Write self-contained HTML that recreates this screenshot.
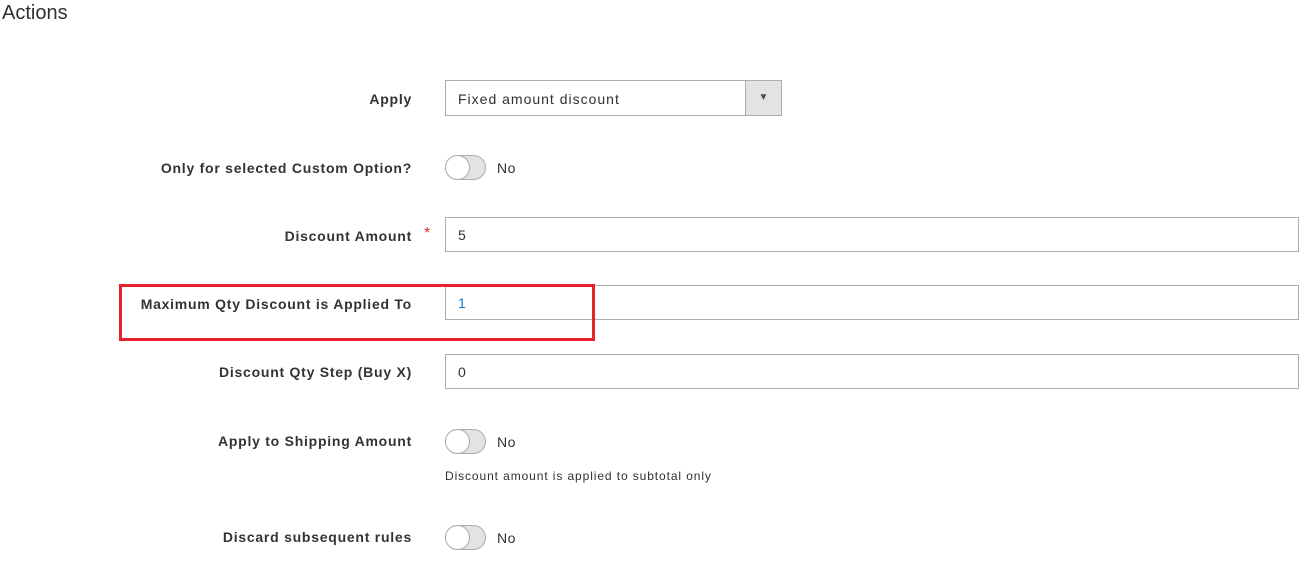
<!DOCTYPE html>
<html><head><style>
body{margin:0;width:1306px;height:566px;background:#fff;font-family:"Liberation Sans",sans-serif;color:#303030;position:relative;overflow:hidden}
.a{position:absolute}
.lbl{position:absolute;right:894px;font-size:14px;font-weight:bold;color:#333;white-space:nowrap;line-height:20px;letter-spacing:0.75px}
.inp{position:absolute;left:445px;width:854px;height:35px;border:1px solid #adadad;box-sizing:border-box;font-size:14px;line-height:34px;padding-left:12px;color:#303030}
.tg{position:absolute;left:445px;width:41px;height:25px;border:1px solid #adadad;border-radius:13px;background:#e3e3e3;box-sizing:border-box}
.tg::before{content:"";position:absolute;left:-1px;top:-1px;width:25px;height:25px;border-radius:50%;background:#fff;border:1px solid #adadad;box-sizing:border-box}
.no{position:absolute;left:497px;font-size:14px;line-height:20px;color:#303030;letter-spacing:0.5px}
</style></head><body>
<div class="a" style="left:2px;top:0;font-size:20px;line-height:26px;color:#303030">Actions</div>

<div class="lbl" style="top:89px">Apply</div>
<div class="a" style="left:445px;top:80px;width:337px;height:36px;border:1px solid #adadad;box-sizing:border-box;font-size:14px;line-height:36px;padding-left:12px;letter-spacing:1px">Fixed amount discount
<div class="a" style="right:0;top:0;width:35px;height:34px;background:#e3e3e3;border-left:1px solid #adadad;text-align:center;font-size:10px;line-height:34px;color:#514943;letter-spacing:0">&#9660;</div></div>

<div class="lbl" style="top:158px">Only for selected Custom Option?</div>
<div class="tg" style="top:155px"></div><div class="no" style="top:158px">No</div>

<div class="lbl" style="top:226px">Discount Amount</div>
<div class="a" style="left:424px;top:225px;color:#e02b27;font-size:16px">*</div>
<div class="inp" style="top:217px">5</div>

<div class="lbl" style="top:294px">Maximum Qty Discount is Applied To</div>
<div class="inp" style="top:285px;color:#1979c3">1</div>
<div class="a" style="left:119px;top:284px;width:476px;height:57px;border:3px solid #e8212b;box-sizing:border-box"></div>

<div class="lbl" style="top:362px">Discount Qty Step (Buy X)</div>
<div class="inp" style="top:354px">0</div>

<div class="lbl" style="top:431px">Apply to Shipping Amount</div>
<div class="tg" style="top:429px"></div><div class="no" style="top:432px">No</div>
<div class="a" style="left:445px;top:468px;font-size:12px;line-height:16px;color:#303030;letter-spacing:0.9px">Discount amount is applied to subtotal only</div>

<div class="lbl" style="top:527px">Discard subsequent rules</div>
<div class="tg" style="top:525px"></div><div class="no" style="top:528px">No</div>
</body></html>
